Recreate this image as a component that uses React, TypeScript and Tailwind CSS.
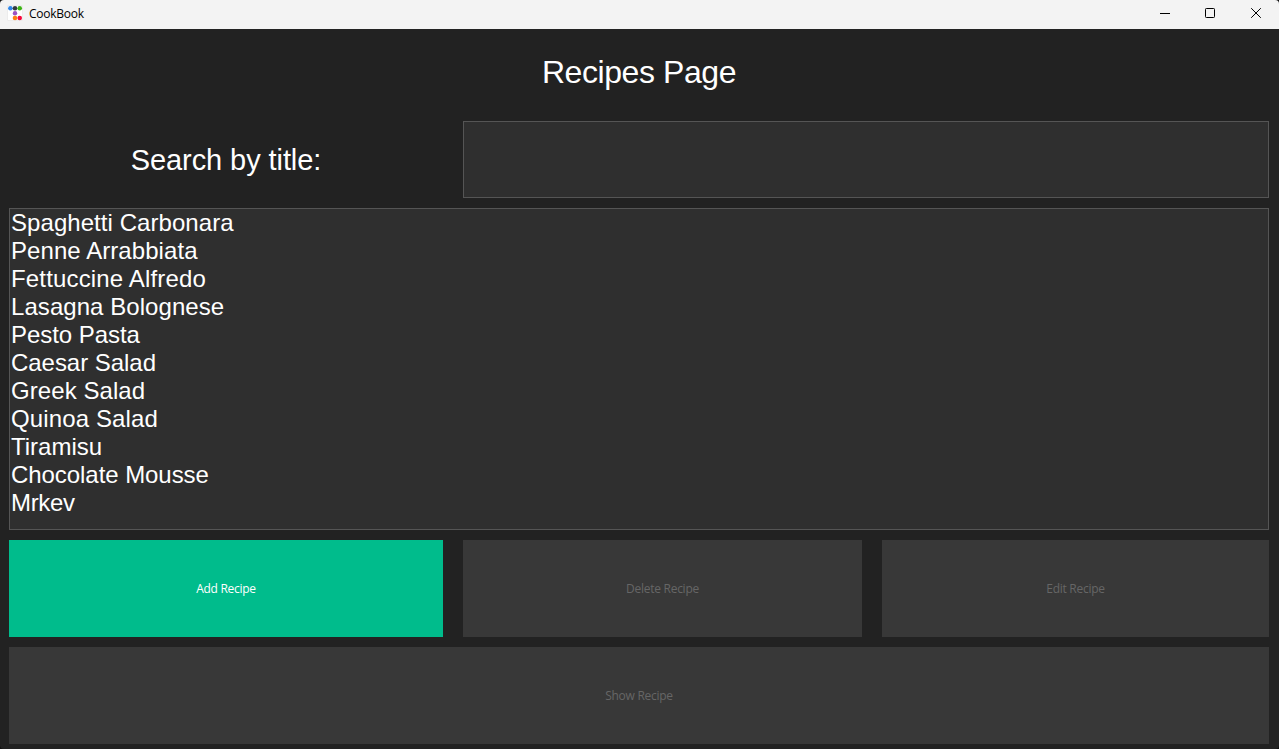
import type { ReactNode } from "react";

const recipes = [
  { name: "Spaghetti Carbonara", tracking: "tracking-[0.06px]" },
  { name: "Penne Arrabbiata", tracking: "tracking-[0.07px]" },
  { name: "Fettuccine Alfredo", tracking: "tracking-[0.16px]" },
  { name: "Lasagna Bolognese", tracking: "tracking-[0.06px]" },
  { name: "Pesto Pasta", tracking: "tracking-[-0.05px]" },
  { name: "Caesar Salad", tracking: "tracking-[-0.04px]" },
  { name: "Greek Salad", tracking: "tracking-[0.07px]" },
  { name: "Quinoa Salad", tracking: "tracking-[0.12px]" },
  { name: "Tiramisu", tracking: "tracking-normal" },
  { name: "Chocolate Mousse", tracking: "tracking-[-0.06px]" },
  { name: "Mrkev", tracking: "tracking-[-0.35px]" },
];

function AppIcon() {
  return (
    <svg width="16" height="16" viewBox="0 0 16 16" className="shrink-0">
      <rect x="0.5" y="0.5" width="15" height="15" rx="0.5" fill="#fff" stroke="#e2e2e2" strokeWidth="0.6" />
      <circle cx="3.4" cy="3.2" r="2.3" fill="#2f86e8" />
      <circle cx="8" cy="3.2" r="2.3" fill="#343a40" />
      <circle cx="12.7" cy="3.2" r="2.3" fill="#3cb315" />
      <circle cx="8" cy="8.2" r="2.2" fill="#9b51c4" />
      <circle cx="8" cy="13" r="2.3" fill="#fd7e14" />
      <circle cx="12.7" cy="13" r="2.3" fill="#f8083c" />
    </svg>
  );
}

function TitleBar() {
  return (
    <header className="flex h-[29px] shrink-0 items-center bg-[#f3f3f3] pb-[3px] pl-[7px] text-black">
      <AppIcon />
      <span className="mt-[2px] ml-[6px] flex-1 text-[12px] leading-4 tracking-[-0.25px]">CookBook</span>
      <div className="flex">
        <button aria-label="Minimize" className="flex w-[45px] justify-center">
          <svg width="10" height="10" viewBox="0 0 10 10"><path d="M0 5.5H10" stroke="#000" /></svg>
        </button>
        <button aria-label="Maximize" className="flex w-[46px] justify-center">
          <svg width="10" height="10" viewBox="0 0 10 10"><rect x="0.5" y="0.5" width="9" height="9" rx="0.8" fill="none" stroke="#000" /></svg>
        </button>
        <button aria-label="Close" className="flex w-[46px] justify-center">
          <svg width="10" height="10" viewBox="0 0 10 10"><path d="M0.2 0.2L9.8 9.8M9.8 0.2L0.2 9.8" stroke="#000" /></svg>
        </button>
      </div>
    </header>
  );
}

function ActionButton({ children, disabled }: { children: ReactNode; disabled?: boolean }) {
  return (
    <button
      disabled={disabled}
      className="flex h-[97px] w-full items-center justify-center bg-[#00bc8c] text-[12px] leading-4 tracking-[-0.27px] text-white disabled:bg-[#383838] disabled:text-[#666666]"
    >
      {children}
    </button>
  );
}

export default function App() {
  return (
    <div className="h-[749px] w-[1279px] bg-[#111111]">
      <div className="flex h-full w-full flex-col overflow-hidden rounded-[4px] bg-[#222222] font-['Open_Sans','Noto_Sans',sans-serif]">
        <TitleBar />
        <main className="flex flex-col gap-[10px] pr-[10px] pl-[9px] text-white">
          <h1 className="flex h-[82px] items-center justify-center pt-[4px] font-['Liberation_Sans',Arial,sans-serif] text-[32px] leading-none tracking-[-0.42px]">
            Recipes Page
          </h1>
          <div className="grid h-[77px] grid-cols-[434px_1fr] gap-[20px]">
            <label
              htmlFor="search"
              className="flex items-center justify-center pt-[2px] font-['Liberation_Sans',Arial,sans-serif] text-[29px] leading-none tracking-[-0.08px]"
            >
              Search by title:
            </label>
            <input
              id="search"
              className="border border-[#555555] bg-[#2f2f2f] px-2 font-['Liberation_Sans',Arial,sans-serif] text-2xl outline-none"
            />
          </div>
          <ul className="h-[322px] border border-[#555555] bg-[#2f2f2f] px-[1px] font-['Liberation_Sans',Arial,sans-serif] text-[24px] leading-[28px]">
            {recipes.map(({ name, tracking }) => (
              <li key={name} className={tracking}>{name}</li>
            ))}
          </ul>
          <div className="grid grid-cols-[434px_399px_387px] gap-[20px]">
            <ActionButton>Add Recipe</ActionButton>
            <ActionButton disabled>Delete Recipe</ActionButton>
            <ActionButton disabled>Edit Recipe</ActionButton>
          </div>
          <ActionButton disabled>Show Recipe</ActionButton>
        </main>
      </div>
    </div>
  );
}
